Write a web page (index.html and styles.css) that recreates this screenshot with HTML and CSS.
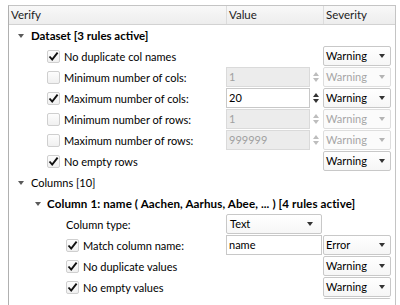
FILE: index.html
```html
<!DOCTYPE html>
<html>
<head>
<meta charset="utf-8">
<link rel="stylesheet" href="styles.css">
</head>
<body>
<div class="table">
  <div class="head">
    <div class="hcell">Verify</div>
    <div class="hcell">Value</div>
    <div class="hcell">Severity</div>
  </div>
  <div class="body">
    <div class="row">
      <div class="c1 lv0"><span class="tri"></span><b>Dataset [3 rules active]</b></div>
      <div class="c2"></div><div class="c3"></div>
    </div>
    <div class="row">
      <div class="c1 lv1"><span class="cb on"><svg viewBox="0 0 13 13"><path d="M2.5 6.5 L5.2 9.6 L10.6 2.6"/></svg></span>No duplicate col names</div>
      <div class="c2"></div>
      <div class="c3"><div class="combo">Warning<span class="arr"></span></div></div>
    </div>
    <div class="row">
      <div class="c1 lv1"><span class="cb"></span>Minimum number of cols:</div>
      <div class="c2"><div class="spin dis"><span class="tf">1</span><span class="sa"><i class="up"></i><i class="dn"></i></span></div></div>
      <div class="c3"><div class="combo dis">Warning<span class="arr"></span></div></div>
    </div>
    <div class="row">
      <div class="c1 lv1"><span class="cb on"><svg viewBox="0 0 13 13"><path d="M2.5 6.5 L5.2 9.6 L10.6 2.6"/></svg></span>Maximum number of cols:</div>
      <div class="c2"><div class="spin"><span class="tf">20</span><span class="sa"><i class="up"></i><i class="dn"></i></span></div></div>
      <div class="c3"><div class="combo">Warning<span class="arr"></span></div></div>
    </div>
    <div class="row">
      <div class="c1 lv1"><span class="cb"></span>Minimum number of rows:</div>
      <div class="c2"><div class="spin dis"><span class="tf">1</span><span class="sa"><i class="up"></i><i class="dn"></i></span></div></div>
      <div class="c3"><div class="combo dis">Warning<span class="arr"></span></div></div>
    </div>
    <div class="row">
      <div class="c1 lv1"><span class="cb"></span>Maximum number of rows:</div>
      <div class="c2"><div class="spin dis"><span class="tf">999999</span><span class="sa"><i class="up"></i><i class="dn"></i></span></div></div>
      <div class="c3"><div class="combo dis">Warning<span class="arr"></span></div></div>
    </div>
    <div class="row">
      <div class="c1 lv1"><span class="cb on"><svg viewBox="0 0 13 13"><path d="M2.5 6.5 L5.2 9.6 L10.6 2.6"/></svg></span>No empty rows</div>
      <div class="c2"></div>
      <div class="c3"><div class="combo">Warning<span class="arr"></span></div></div>
    </div>
    <div class="row">
      <div class="c1 lv0"><span class="tri"></span>Columns [10]</div>
      <div class="c2"></div><div class="c3"></div>
    </div>
    <div class="row">
      <div class="c1 lvc"><span class="tri"></span><b class="long">Column 1: name ( Aachen, Aarhus, Abee, ... ) [4 rules active]</b></div>
      <div class="c2"></div><div class="c3"></div>
    </div>
    <div class="row">
      <div class="c1 lv2">Column type:</div>
      <div class="c2"><div class="combo wide">Text<span class="arr"></span></div></div>
      <div class="c3"></div>
    </div>
    <div class="row">
      <div class="c1 lv2"><span class="cb on"><svg viewBox="0 0 13 13"><path d="M2.5 6.5 L5.2 9.6 L10.6 2.6"/></svg></span>Match column name:</div>
      <div class="c2"><div class="field">name</div></div>
      <div class="c3"><div class="combo">Error<span class="arr"></span></div></div>
    </div>
    <div class="row">
      <div class="c1 lv2"><span class="cb on"><svg viewBox="0 0 13 13"><path d="M2.5 6.5 L5.2 9.6 L10.6 2.6"/></svg></span>No duplicate values</div>
      <div class="c2"></div>
      <div class="c3"><div class="combo">Warning<span class="arr"></span></div></div>
    </div>
    <div class="row">
      <div class="c1 lv2"><span class="cb on"><svg viewBox="0 0 13 13"><path d="M2.5 6.5 L5.2 9.6 L10.6 2.6"/></svg></span>No empty values</div>
      <div class="c2"></div>
      <div class="c3"><div class="combo">Warning<span class="arr"></span></div></div>
    </div>
    <div class="row">
      <div class="c1 lv2"></div>
      <div class="c2"></div>
      <div class="c3"><div class="combo blank"></div></div>
    </div>
  </div>
</div>
</body>
</html>
```
FILE: styles.css
```css
html, body {
  margin: 0;
  padding: 0;
  background: #ffffff;
  width: 400px;
  height: 305px;
  overflow: hidden;
}
body {
  font-family: "Lato", "Open Sans", sans-serif;
  font-size: 11px;
  color: #000;
  padding: 5px 0 0 8px;
  box-sizing: border-box;
}
.table {
  width: 388px;
  height: 300px;
  border: 1px solid #c4c4c4;
  border-left-color: #b0b0b0;
  border-bottom: none;
  box-sizing: border-box;
  overflow: hidden;
}
.head {
  display: grid;
  grid-template-columns: 218px 97px 71px;
  height: 18px;
  background: linear-gradient(#f8f8f8, #ededed);
  border-bottom: 1px solid #d2d2d2;
}
.hcell {
  padding-left: 2px;
  line-height: 17px;
  font-size: 11.5px;
  color: #222;
  border-right: 1px solid #dcdcdc;
}
.hcell:last-child { border-right: none; }
.body {
  height: 274px;
  overflow: hidden;
}
.row {
  display: grid;
  grid-template-columns: 217px 97px 71px;
  height: 21px;
  align-items: center;
}
.c1 {
  display: flex;
  align-items: center;
  white-space: nowrap;
  height: 21px;
  overflow: visible;
}
.lv0 { padding-left: 9px; }
.lv1 { padding-left: 38px; }
.lvc { padding-left: 26px; }
.lv2 { padding-left: 57px; }
.tri {
  width: 0; height: 0;
  border-left: 3px solid transparent;
  border-right: 3px solid transparent;
  border-top: 4px solid #5a5a5a;
  margin-right: 7px;
  margin-top: 1px;
}
.lvc .tri { margin-right: 6px; }
b { font-weight: 700; font-size: 11.5px; }
.long { position: relative; z-index: 1; font-size: 11.6px; letter-spacing: 0.1px; }
.cb {
  width: 11px;
  height: 11px;
  border: 1px solid #cfcfcf;
  border-radius: 2px;
  background: linear-gradient(#fdfdfd, #f0f0f0);
  margin-right: 4px;
  flex: none;
  display: flex;
}
.cb svg { width: 13px; height: 13px; margin: -1px; overflow: visible; }
.cb path { fill: none; stroke: #111; stroke-width: 1.9; }
.c2, .c3 { height: 21px; display: flex; align-items: flex-start; }
.combo {
  position: relative;
  width: 68px;
  height: 20px;
  box-sizing: border-box;
  border: 1px solid #c8c8c8;
  border-radius: 2px;
  background: linear-gradient(#ffffff, #f6f6f6);
  padding-left: 2px;
  line-height: 18px;
  color: #000;
}
.combo.wide { width: 96px; padding-left: 3px; }
.arr {
  position: absolute;
  right: 5px;
  top: 7px;
  width: 0; height: 0;
  border-left: 3.5px solid transparent;
  border-right: 3.5px solid transparent;
  border-top: 4px solid #333;
}
.combo.wide .arr { right: 8px; }
.combo.dis { color: #a6a6a6; background: #fbfbfb; border-color: #dedede; }
.combo.dis .arr { border-top-color: #b4b4b4; }
.spin {
  display: flex;
  width: 96px;
  height: 20px;
}
.tf {
  flex: 1;
  border: 1px solid #c8c8c8;
  background: #fff;
  padding-left: 2px;
  line-height: 18px;
}
.spin.dis .tf { background: #ececec; border-color: #dadada; color: #a0a0a0; }
.sa {
  width: 12px;
  display: flex;
  flex-direction: column;
  align-items: center;
  justify-content: center;
  gap: 2px;
}
.sa i { width: 0; height: 0; border-left: 3px solid transparent; border-right: 3px solid transparent; }
.sa .up { border-bottom: 4px solid #333; }
.sa .dn { border-top: 4px solid #333; }
.spin.dis .sa .up { border-bottom-color: #bdbdbd; }
.spin.dis .sa .dn { border-top-color: #bdbdbd; }
.field {
  width: 96px;
  height: 20px;
  box-sizing: border-box;
  border: 1px solid #c8c8c8;
  background: #fff;
  padding-left: 2px;
  line-height: 18px;
}
```
